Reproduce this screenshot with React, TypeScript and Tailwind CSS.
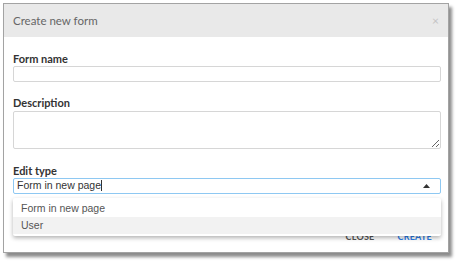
export default function App() {
  return (
    <div className="w-[458px] h-[264px] bg-white pt-[3px] pl-[3px]">
      <div className="relative w-[446px] h-[250px] border border-[#a3a3a3] bg-white shadow-[3px_4px_3px_rgba(0,0,0,0.45)] font-['Lato',sans-serif]">
        <div className="h-[33px] bg-[#e9e9e9] flex items-center justify-between pl-[9px] pr-[9px]">
          <span className="text-[11.5px] text-[#666]">Create new form</span>
          <span className="text-[12px] text-[#c4c4c4] leading-none">×</span>
        </div>

        <div className="pl-[9px] pr-[7px] flex flex-col">
          <label className="mt-[15px] text-[11px] leading-[14px] font-bold text-[#333]">Form name</label>
          <input className="h-[16px] border border-[#d6d6d6] rounded-[2px] outline-none" />

          <label className="mt-[14px] text-[11px] leading-[14px] font-bold text-[#333]">Description</label>
          <textarea className="mt-[1px] h-[38px] border border-[#d6d6d6] rounded-[2px] outline-none resize-y" />

          <label className="mt-[15px] text-[11px] leading-[14px] font-bold text-[#333]">Edit type</label>
          <div className="h-[16px] border border-[#8ec8f2] rounded-[2px] flex items-center justify-between pl-[3px] pr-[10px] font-['Liberation_Sans',sans-serif] text-[10.5px] text-[#333]">
            <span>
              Form in new page<span className="inline-block w-px h-[11px] bg-[#333] align-[-2px]" />
            </span>
            <svg width="7" height="4" viewBox="0 0 7 4">
              <polygon points="0,4 7,4 3.5,0" fill="#333" />
            </svg>
          </div>

          <div className="mt-[36px] flex justify-end gap-[23px] pr-[9px] text-[9px] font-bold tracking-wide">
            <span className="text-[#555]">CLOSE</span>
            <span className="text-[#2b7de9]">CREATE</span>
          </div>
        </div>

        <div className="absolute left-[9px] top-[194px] w-[428px] bg-white rounded-[2px] shadow-[0_2px_4px_rgba(0,0,0,0.3)] py-[2px] font-['Liberation_Sans',sans-serif] text-[10.5px] text-[#555]">
          <div className="h-[17px] flex items-center pl-[8px]">Form in new page</div>
          <div className="h-[17px] flex items-center pl-[8px] bg-[#f2f2f2]">User</div>
        </div>
      </div>
    </div>
  )
}
